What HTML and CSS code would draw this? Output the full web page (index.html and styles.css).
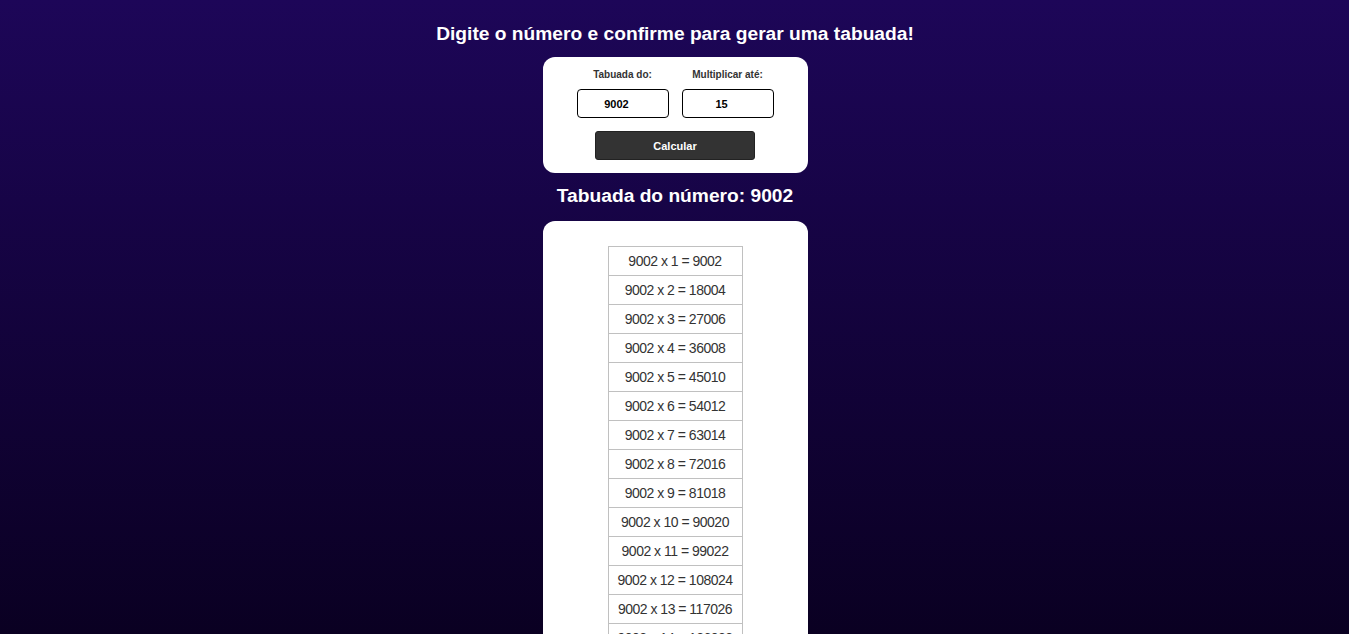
FILE: index.html
```html
<!DOCTYPE html>
<html lang="pt-BR">
<head>
<meta charset="utf-8">
<title>Tabuada</title>
<link rel="stylesheet" href="styles.css">
</head>
<body>
<main class="page">
  <h1 class="title">Digite o número e confirme para gerar uma tabuada!</h1>
  <section class="card form-card">
    <div class="fields">
      <div class="field">
        <label class="field-label" for="num">Tabuada do:</label>
        <input class="field-input" id="num" type="text" value="9002">
      </div>
      <div class="field">
        <label class="field-label" for="ate">Multiplicar até:</label>
        <input class="field-input" id="ate" type="text" value="15">
      </div>
    </div>
    <button class="btn" type="button">Calcular</button>
  </section>
  <h2 class="subtitle">Tabuada do número: 9002</h2>
  <section class="card result-card">
    <table class="tabuada">
      <tbody>
        <tr><td>9002 x 1 = 9002</td></tr>
        <tr><td>9002 x 2 = 18004</td></tr>
        <tr><td>9002 x 3 = 27006</td></tr>
        <tr><td>9002 x 4 = 36008</td></tr>
        <tr><td>9002 x 5 = 45010</td></tr>
        <tr><td>9002 x 6 = 54012</td></tr>
        <tr><td>9002 x 7 = 63014</td></tr>
        <tr><td>9002 x 8 = 72016</td></tr>
        <tr><td>9002 x 9 = 81018</td></tr>
        <tr><td>9002 x 10 = 90020</td></tr>
        <tr><td>9002 x 11 = 99022</td></tr>
        <tr><td>9002 x 12 = 108024</td></tr>
        <tr><td>9002 x 13 = 117026</td></tr>
        <tr><td>9002 x 14 = 126028</td></tr>
        <tr><td>9002 x 15 = 135030</td></tr>
      </tbody>
    </table>
  </section>
</main>
</body>
</html>
```
FILE: styles.css
```css
html {
  background: linear-gradient(180deg, #1d0658 0%, #0a0022 100%) fixed;
  background-color: #0a0022;
  min-height: 100%;
}
body {
  margin: 0;
  font-family: "Liberation Sans", Arial, sans-serif;
}
.page {
  display: flex;
  flex-direction: column;
  align-items: center;
  padding: 22px 0 30px 1px;
}
.title {
  margin: 0 0 12px;
  font-size: 19.2px;
  line-height: 23px;
  font-weight: bold;
  color: #ffffff;
}
.subtitle {
  margin: 11px 0 14px;
  font-size: 19.2px;
  line-height: 23px;
  font-weight: bold;
  color: #ffffff;
}
.card {
  width: 265px;
  box-sizing: border-box;
  background: #ffffff;
  border-radius: 12px;
}
.form-card {
  display: flex;
  flex-direction: column;
  align-items: center;
  gap: 13px;
  padding: 12px 0 13px;
}
.fields {
  display: flex;
  gap: 13px;
}
.field {
  display: flex;
  flex-direction: column;
  align-items: center;
  gap: 8px;
}
.field-label {
  font-size: 10px;
  line-height: 12px;
  font-weight: bold;
  color: #333333;
}
.field-input {
  width: 92px;
  height: 29px;
  box-sizing: border-box;
  border: 1px solid #000000;
  border-radius: 4px;
  padding: 0 12px 0 0;
  text-align: center;
  font-family: "Liberation Sans", Arial, sans-serif;
  font-size: 11px;
  font-weight: bold;
  color: #000000;
  background: #ffffff;
  outline: none;
}
.btn {
  width: 160px;
  height: 29px;
  box-sizing: border-box;
  border: 1px solid #222222;
  border-radius: 3px;
  background: #333333;
  color: #ffffff;
  font-family: "Liberation Sans", Arial, sans-serif;
  font-size: 11px;
  font-weight: bold;
  cursor: pointer;
}
.result-card {
  display: flex;
  justify-content: center;
  padding: 25px 0 25px;
}
.tabuada {
  border-collapse: collapse;
  width: 135px;
}
.tabuada td {
  border: 1px solid #c0c0c0;
  padding: 6px 0;
  height: 16px;
  line-height: 16px;
  font-size: 14px;
  letter-spacing: -0.5px;
  color: #333333;
  text-align: center;
  white-space: nowrap;
}
```
